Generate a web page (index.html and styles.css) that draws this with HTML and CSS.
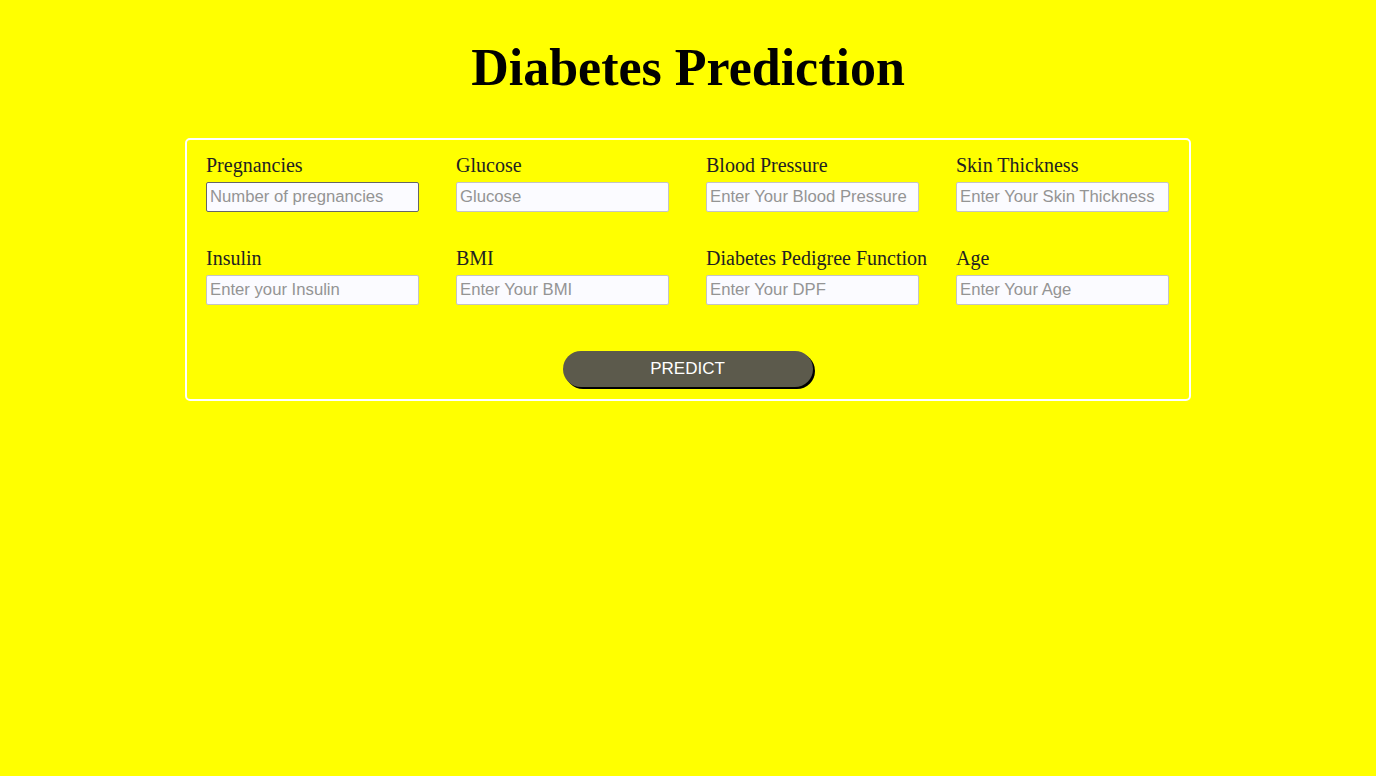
FILE: index.html
```html
<!DOCTYPE html>
<html>
<head>
<meta charset="utf-8">
<title>Diabetes Prediction</title>
<link rel="stylesheet" href="styles.css">
</head>
<body>
<h1 class="title">Diabetes Prediction</h1>
<form class="card">
  <div class="grid">
    <div class="field"><label>Pregnancies</label><input class="focused" type="text" placeholder="Number of pregnancies"></div>
    <div class="field"><label>Glucose</label><input type="text" placeholder="Glucose"></div>
    <div class="field"><label>Blood Pressure</label><input type="text" placeholder="Enter Your Blood Pressure"></div>
    <div class="field"><label>Skin Thickness</label><input type="text" placeholder="Enter Your Skin Thickness"></div>
    <div class="field"><label>Insulin</label><input type="text" placeholder="Enter your Insulin"></div>
    <div class="field"><label>BMI</label><input type="text" placeholder="Enter Your BMI"></div>
    <div class="field"><label>Diabetes Pedigree Function</label><input type="text" placeholder="Enter Your DPF"></div>
    <div class="field"><label>Age</label><input type="text" placeholder="Enter Your Age"></div>
  </div>
  <div class="actions"><button type="button" class="btn">PREDICT</button></div>
</form>
</body>
</html>
```
FILE: styles.css
```css
html, body { margin: 0; padding: 0; }
body {
  background: #ffff00;
  font-family: "Liberation Serif", "Times New Roman", serif;
  color: #222;
  height: 776px;
}
.title {
  margin: 0 0 40px;
  padding-top: 38px;
  height: 98px;
  box-sizing: border-box;
  text-align: center;
  font-family: "Liberation Serif", "Times New Roman", serif;
  font-weight: bold;
  font-size: 52px;
  line-height: 60px;
  color: #000;
}
.card {
  width: 1006px;
  box-sizing: border-box;
  margin: 0 auto;
  border: 2px solid #fff;
  border-radius: 5px;
  padding: 14px 20px 12px 19px;
}
.grid {
  display: grid;
  grid-template-columns: repeat(4, 213px);
  column-gap: 37px;
  row-gap: 35px;
}
.field { display: flex; flex-direction: column; }
.field label {
  font-size: 20px;
  line-height: 22px;
  margin-bottom: 6px;
  white-space: nowrap;
}
.field input {
  height: 30px;
  box-sizing: border-box;
  border: 1px solid #c4c4c4;
  border-radius: 2px;
  background: #fbfbff;
  padding: 0 3px;
  font-family: "Liberation Sans", Arial, sans-serif;
  font-size: 16.7px;
  outline: none;
}
.field input::placeholder { color: #949494; }
.field input.focused { border-color: #666; }
.actions {
  display: flex;
  justify-content: center;
  margin-top: 46px;
}
.btn {
  width: 250px;
  height: 36px;
  border: none;
  border-radius: 18px;
  background: #5c5a4c;
  color: #fff;
  font-family: "Liberation Sans", Arial, sans-serif;
  font-size: 17px;
  box-shadow: 2px 2px 0 #000;
  padding: 0;
}
```
